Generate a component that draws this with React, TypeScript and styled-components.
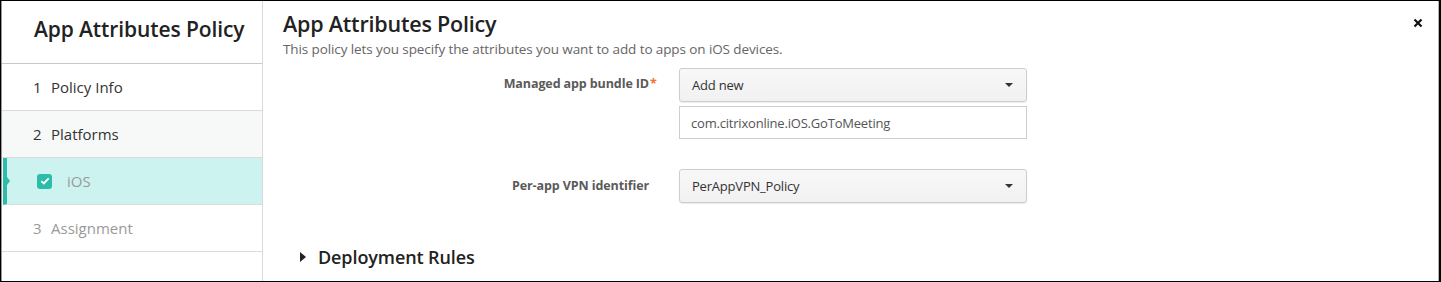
import React from 'react'
import styled, { createGlobalStyle } from 'styled-components'

const Global = createGlobalStyle`
  html, body {
    margin: 0;
    padding: 0;
    background: #fff;
  }
  body {
    font-family: "Open Sans", "Noto Sans", Arial, sans-serif;
  }
  * {
    box-sizing: border-box;
  }
`

const Frame = styled.div`
  width: 1441px;
  height: 282px;
  border-style: solid;
  border-color: #000;
  border-width: 1px 2px 1px 1px;
  overflow: hidden;
`

const Inner = styled.div`
  display: flex;
  height: 100%;
  border-left: 1px solid #9a9a9a;
  border-right: 1px solid #b5b5b5;
`

const Sidebar = styled.nav`
  width: 261px;
  flex: none;
  border-right: 1px solid #d9d9d9;
  display: flex;
  flex-direction: column;
`

const SideTitle = styled.div`
  height: 63px;
  padding: 14px 0 0 32px;
  font-size: 21px;
  font-weight: 600;
  color: #222;
  letter-spacing: -0.1px;
  border-bottom: 1px solid #c8c8c8;
`

const Step = styled.div<{ $bg?: string; $muted?: boolean; $active?: boolean }>`
  position: relative;
  height: 47px;
  display: flex;
  align-items: center;
  gap: 8px;
  padding-left: ${(p) => (p.$active ? '30px' : '31px')};
  font-size: 15px;
  color: ${(p) => (p.$muted ? '#9a9a9a' : '#333')};
  background: ${(p) => p.$bg || '#fff'};
  border-bottom: 1px solid #dcdcdc;
  border-left: ${(p) => (p.$active ? '4px solid #2bbda9' : 'none')};
  margin-left: ${(p) => (p.$active ? '1px' : '0')};

  &::after {
    content: ${(p) => (p.$active ? "''" : 'none')};
    position: absolute;
    left: 0;
    top: 50%;
    margin-top: -4px;
    border-top: 4px solid transparent;
    border-bottom: 4px solid transparent;
    border-left: 3px solid #2bbda9;
  }
`

const StepNum = styled.span`
  display: inline-block;
  width: 10px;
`

const Check = styled.span`
  width: 15px;
  height: 15px;
  border-radius: 3px;
  background: #2bbda9;
  display: inline-flex;
  align-items: center;
  justify-content: center;
  margin-right: 7px;
`

const Main = styled.main`
  position: relative;
  flex: 1;
  padding: 9px 0 0 20px;
`

const Title = styled.h1`
  margin: 0;
  font-size: 21.5px;
  font-weight: 600;
  color: #222;
  line-height: 28px;
  letter-spacing: -0.2px;
`

const Desc = styled.p`
  margin: 2px 0 0;
  font-size: 13.5px;
  color: #666;
  line-height: 18px;
  letter-spacing: -0.1px;
`

const Close = styled.button`
  position: absolute;
  right: 12px;
  top: 14px;
  border: none;
  background: none;
  padding: 0;
  width: 16px;
  height: 16px;
  display: flex;
  align-items: center;
  justify-content: center;
`

const Form = styled.div`
  display: grid;
  grid-template-columns: 366px 348px;
  column-gap: 30px;
  margin-top: 10px;
`

const Label = styled.div<{ $top: number }>`
  position: relative;
  justify-self: end;
  padding-top: ${(p) => p.$top}px;
  font-size: 12.5px;
  font-weight: 700;
  color: #5a5a5a;
  letter-spacing: -0.1px;
`

const Star = styled.span`
  position: absolute;
  left: 100%;
  margin-left: 1px;
  color: #f07330;
`

const Field = styled.div<{ $mb?: number }>`
  display: flex;
  flex-direction: column;
  gap: 4px;
  margin-bottom: ${(p) => p.$mb || 0}px;
`

const Select = styled.div`
  height: 34px;
  border: 1px solid #cdcdcd;
  border-radius: 3px;
  background: linear-gradient(#f8f8f8, #f1f1f1);
  display: flex;
  align-items: center;
  justify-content: space-between;
  padding: 0 13px 0 12px;
  font-size: 13px;
  color: #333;
  letter-spacing: -0.2px;
  box-shadow: 0 1px 1px rgba(0, 0, 0, 0.08);
`

const Caret = styled.span`
  width: 0;
  height: 0;
  border-left: 4px solid transparent;
  border-right: 4px solid transparent;
  border-top: 4px solid #333;
`

const Input = styled.div`
  height: 33px;
  border: 1px solid #cdcdcd;
  background: #fff;
  display: flex;
  align-items: center;
  padding: 0 11px;
  font-size: 13px;
  color: #555;
  letter-spacing: -0.2px;
`

const Section = styled.div`
  display: flex;
  align-items: center;
  gap: 12px;
  margin: 42px 0 0 17px;
  font-size: 18px;
  font-weight: 600;
  color: #222;
  letter-spacing: -0.1px;
`

const Tri = styled.span`
  width: 0;
  height: 0;
  border-top: 5px solid transparent;
  border-bottom: 5px solid transparent;
  border-left: 6px solid #222;
`

export default function App() {
  return (
    <>
      <Global />
      <Frame>
        <Inner>
          <Sidebar>
            <SideTitle>App Attributes Policy</SideTitle>
            <Step>
              <StepNum>1</StepNum>Policy Info
            </Step>
            <Step $bg="#f7f9f9">
              <StepNum>2</StepNum>Platforms
            </Step>
            <Step $bg="#ccf3ef" $muted $active>
              <Check>
                <svg width="10" height="8" viewBox="0 0 10 8">
                  <path d="M1.3 4.1 L3.8 6.4 L8.7 1.4" fill="none" stroke="#fff" strokeWidth="1.9" />
                </svg>
              </Check>
              iOS
            </Step>
            <Step $muted>
              <StepNum>3</StepNum>Assignment
            </Step>
          </Sidebar>
          <Main>
            <Title>App Attributes Policy</Title>
            <Desc>This policy lets you specify the attributes you want to add to apps on iOS devices.</Desc>
            <Close aria-label="close">
              <svg width="10" height="10" viewBox="0 0 10 10">
                <path d="M1.5 1.5 L8.5 8.5 M8.5 1.5 L1.5 8.5" stroke="#111" strokeWidth="2.2" />
              </svg>
            </Close>
            <Form>
              <Label $top={7}>
                Managed app bundle ID<Star>*</Star>
              </Label>
              <Field $mb={30}>
                <Select>
                  Add new
                  <Caret />
                </Select>
                <Input>com.citrixonline.iOS.GoToMeeting</Input>
              </Field>
              <Label $top={8}>Per-app VPN identifier</Label>
              <Field>
                <Select>
                  PerAppVPN_Policy
                  <Caret />
                </Select>
              </Field>
            </Form>
            <Section>
              <Tri />
              Deployment Rules
            </Section>
          </Main>
        </Inner>
      </Frame>
    </>
  )
}
